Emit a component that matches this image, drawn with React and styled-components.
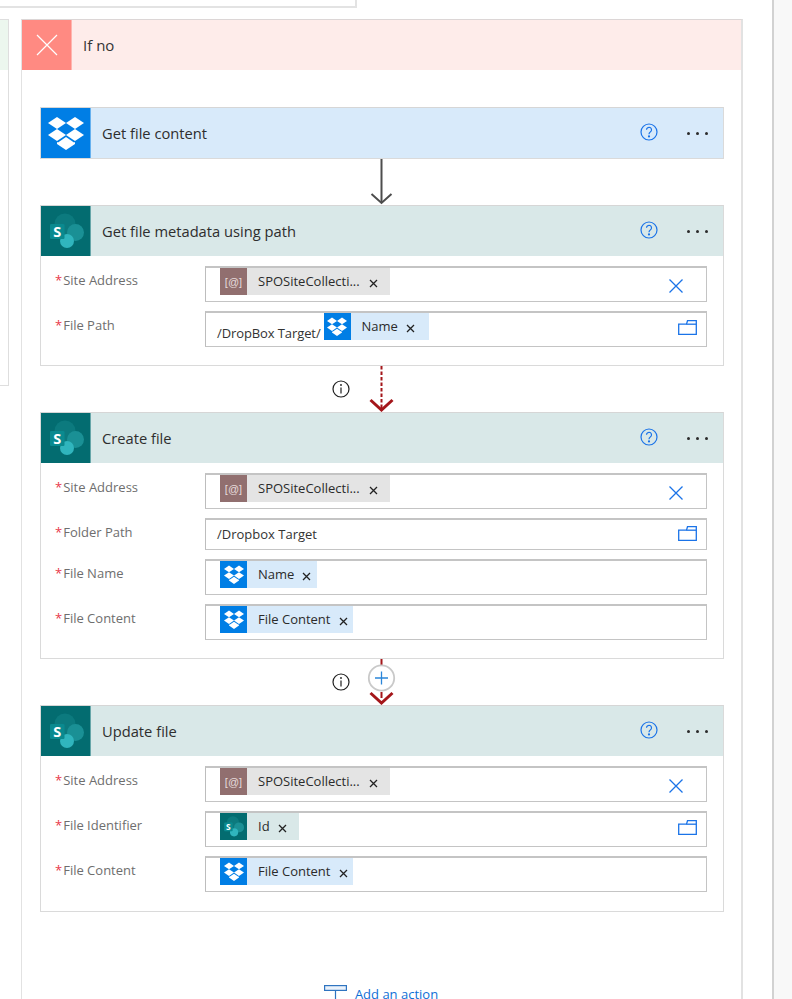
import React from "react";
import styled, { createGlobalStyle } from "styled-components";

const Global = createGlobalStyle`
  html, body { margin: 0; padding: 0; background: #fff; }
  body { font-family: "Open Sans", "Liberation Sans", sans-serif; color: #2b2b2b; }
  * { box-sizing: border-box; }
`;

const Page = styled.div`
  width: 792px; height: 999px; overflow: hidden; display: flex; background: #fff;
`;
const Canvas = styled.main`
  width: 772px; flex: none; height: 999px; overflow: hidden; display: flex; flex-direction: column;
`;
const SidePane = styled.aside`
  flex: 1; background: #f8f8f8; border-left: 2px solid #d2d2d2;
`;
const TopBox = styled.div`
  width: 357px; height: 8px; flex: none; border-right: 2px solid #e3e3e3; border-bottom: 2px solid #e3e3e3;
`;
const Branches = styled.div`
  margin-top: 11px; display: flex; gap: 12px; align-items: flex-start;
`;
const YesBranch = styled.div`
  width: 9px; height: 367px; flex: none; border-top: 1px solid #dedede; border-right: 1px solid #dedede; border-bottom: 1px solid #dedede;
`;
const YesHeader = styled.div`
  height: 50px; background: #ecf7ee;
`;
const NoBranch = styled.section`
  width: 722px; flex: none; height: 990px; border: 1px solid #e2e2e2; border-right-width: 2px; border-top-color: #dcd6d6;
`;
const NoHeader = styled.header`
  height: 50px; background: #feecea; display: flex; align-items: center; gap: 11px;
`;
const NoIcon = styled.div`
  width: 50px; height: 50px; background: #ff8a82; border-right: 1px solid #ffb5af; display: flex; align-items: center; justify-content: center;
`;
const NoTitle = styled.span`
  font-size: 15px; color: #333;
`;
const Flow = styled.div`
  padding: 37px 17px 0 18px; display: flex; flex-direction: column;
`;
const Card = styled.article`
  border: 1px solid #dadada; border-top-color: #d6d6d6; background: #fff;
`;
const CardHeader = styled.div`
  height: 50px; display: flex; align-items: center; background: ${p => (p.$tone === "dropbox" ? "#d8eafa" : "#d9e8e8")};
`;
const CardIcon = styled.div`
  width: 50px; height: 50px; flex: none; display: flex; align-items: center; justify-content: center;
  background: ${p => (p.$tone === "dropbox" ? "#007ee5" : "#036c70")};
  border-right: 1px solid #ffffff66;
`;
const CardTitle = styled.h3`
  margin: 0 0 0 11px; flex: 1; font-size: 14.7px; font-weight: 400; color: #2e2e2e;
`;
const HeaderActions = styled.div`
  display: flex; align-items: center; gap: 29px; padding-right: 15px; margin-top: -2px;
`;
const Dots = styled.div`
  display: flex; gap: 6px; margin-top: 3px;
`;
const Dot = styled.span`
  width: 3px; height: 3px; border-radius: 50%; background: #2b2b2b;
`;
const CardBody = styled.div`
  padding: 10px 16px ${p => p.$bottom}px 14px; display: flex; flex-direction: column; gap: 9px;
`;
const Row = styled.div`
  display: flex; align-items: flex-start;
`;
const Label = styled.label`
  width: 150px; flex: none; padding-top: 4px; font-size: 13px; line-height: 20px; color: #6e6e6e; display: flex; gap: 1px;
`;
const Star = styled.span`
  color: #e8374a;
`;
const Input = styled.div`
  flex: 1; height: ${p => (p.$short ? "32px" : "36px")}; border: 1px solid #c4c4c4; border-top-width: 2px; border-left-color: #bdbdbd;
  display: flex; align-items: ${p => (p.$short ? "center" : "flex-start")}; padding-left: ${p => (p.$plain ? "11px" : "14px")};
  padding-right: 8px; background: #fff;
`;
const PlainText = styled.span`
  font-size: 13px; color: #333; white-space: pre; margin-top: -2px;
`;
const PrefixText = styled(PlainText)`
  align-self: flex-end; padding-bottom: 4px; margin-left: -3px; margin-right: 3px; letter-spacing: -0.1px;
`;
const Token = styled.div`
  height: 27px; display: flex; align-items: center;
  background: ${p => ({ var: "#e4e4e4", dropbox: "#d8eafa", sp: "#d9e8e8" }[p.$tone])};
`;
const TokenIcon = styled.div`
  width: 27px; height: 27px; flex: none; display: flex; align-items: center; justify-content: center;
  background: ${p => ({ var: "#916f6f", dropbox: "#007ee5", sp: "#036c70" }[p.$tone])};
`;
const VarGlyph = styled.span`
  font-family: "Liberation Sans", sans-serif; font-size: 11px; color: #e6dcdc;
`;
const TokenText = styled.span`
  margin-left: 11px; font-size: 13px; color: #2b2b2b; white-space: nowrap; margin-top: -2px;
`;
const TokenClose = styled.span`
  margin: 3px ${p => p.$tail}px 0 ${p => p.$gap}px; display: flex;
`;
const TrailIcon = styled.span`
  margin-left: auto; display: flex; align-self: center; margin-top: ${p => p.$shift}px;
  padding-right: ${p => p.$pad}px;
`;
const Connector = styled.div`
  height: 46px; display: flex; justify-content: center;
`;
const AddAction = styled.div`
  margin-top: 73px; padding-right: 2px; display: flex; justify-content: center; align-items: flex-start; gap: 8px;
`;
const AddText = styled.span`
  font-size: 13px; line-height: 18px; color: #0f6fd6;
`;

const Dropbox = ({ size = 36 }) => (
  <svg width={size} height={size * 34 / 36} viewBox="0 0 36 34" fill="#fff">
    <path d="M9 1 18 7 9 13 0 7Z" />
    <path d="M27 1 36 7 27 13 18 7Z" />
    <path d="M9 13 18 19 9 25 0 19Z" />
    <path d="M27 13 36 19 27 25 18 19Z" />
    <path d="M18 21 26 26.500 27 26 27 28 18 34 9 28 9 26 10 26.500Z" />
  </svg>
);

const SharePoint = ({ size = 36 }) => (
  <svg width={size} height={size} viewBox="0 0 36 36">
    <circle cx="17" cy="11" r="10.500" fill="#0c7a7e" />
    <circle cx="27.500" cy="19.500" r="8.500" fill="#1a9095" />
    <circle cx="19" cy="28" r="7" fill="#30b5bd" />
    <rect x="2" y="11" width="14.500" height="15" rx="1.200" fill="#0a8a8f" />
    <text x="9.200" y="23.500" fontFamily="Open Sans, sans-serif" fontSize="14.500" fontWeight="700" fill="#fff" textAnchor="middle">S</text>
  </svg>
);

const Help = () => (
  <svg width="18" height="18" viewBox="0 0 18 18" fill="none" stroke="#1a73e8" strokeWidth="1.200">
    <circle cx="9" cy="9" r="8" />
    <path d="M6.500 6.800a2.500 2.500 0 1 1 4 2c-.9.7-1.500 1.100-1.500 2.400" />
    <circle cx="9" cy="13.400" r=".5" fill="#1a73e8" />
  </svg>
);

const SmallX = () => (
  <svg width="9" height="9" viewBox="0 0 9 9" stroke="#222" strokeWidth="1.300">
    <path d="M1 1 8 8M8 1 1 8" />
  </svg>
);

const ClearX = () => (
  <svg width="14" height="14" viewBox="0 0 14 14" stroke="#1a73e8" strokeWidth="1.300">
    <path d="M.5 .5 13.500 13.500M13.500 .5 .5 13.500" />
  </svg>
);

const Folder = () => (
  <svg width="19" height="15" viewBox="0 0 19 15" fill="none" stroke="#1a73e8" strokeWidth="1.300">
    <path d="M.7 4.200H8.500L9.500 .7H18.300V14.300H.7Z" />
    <path d="M8.500 4.200H18.300" />
  </svg>
);

const PlainArrow = () => (
  <svg width="120" height="46" viewBox="0 0 120 46" fill="none" stroke="#4d4d4d">
    <path d="M59.500 0V44" strokeWidth="2" />
    <path d="M49.500 35 59.500 44 69.500 35" strokeWidth="2" />
  </svg>
);

const Info = () => (
  <>
    <circle cx="19" cy="23" r="8" fill="none" stroke="#1f1f1f" strokeWidth="1.200" />
    <path d="M19 21.500V27.500" stroke="#1f1f1f" strokeWidth="1.200" />
    <circle cx="19" cy="19" r=".9" fill="#1f1f1f" />
  </>
);

const DashedArrow = () => (
  <svg width="120" height="46" viewBox="0 0 120 46" fill="none">
    <Info />
    <path d="M59.500 0V42" stroke="#a4161a" strokeWidth="2" strokeDasharray="3.500 2" />
    <path d="M48.500 34 59.500 44 70.500 34" stroke="#a4161a" strokeWidth="3" />
  </svg>
);

const PlusArrow = () => (
  <svg width="120" height="46" viewBox="0 0 120 46" fill="none">
    <Info />
    <path d="M59.500 0V6M59.500 33V39" stroke="#a4161a" strokeWidth="2" />
    <circle cx="59.500" cy="19" r="12.700" fill="#fff" stroke="#c9c9c9" strokeWidth="1.800" />
    <path d="M59.500 12.500V25.500M53 19H66" stroke="#2b86d9" strokeWidth="1.300" />
    <path d="M48.500 34 59.500 44 70.500 34" stroke="#a4161a" strokeWidth="3" />
  </svg>
);

const AddIcon = () => (
  <svg width="23" height="14" viewBox="0 0 23 14" fill="none" stroke="#2f74c0" strokeWidth="1.200">
    <rect x=".6" y=".6" width="21.800" height="4.800" fill="#eaf2fb" />
    <path d="M11.500 5.400V14" />
  </svg>
);

const TokenGlyph = ({ tone }) => {
  if (tone === "var") return <VarGlyph>[@]</VarGlyph>;
  if (tone === "dropbox") return <Dropbox size={20} />;
  return <SharePoint size={21} />;
};

const Chip = ({ tone, text, tail = 5, gap = 9 }) => (
  <Token $tone={tone}>
    <TokenIcon $tone={tone}><TokenGlyph tone={tone} /></TokenIcon>
    <TokenText>{text}</TokenText>
    <TokenClose $tail={tail} $gap={gap}><SmallX /></TokenClose>
  </Token>
);

const Field = ({ label, chip, tone, prefix, value, trail, short, tail, gap }) => (
  <Row>
    <Label><Star>*</Star>{label}</Label>
    <Input $short={short} $plain={!!value}>
      {prefix && <PrefixText>{prefix}</PrefixText>}
      {value && <PlainText>{value}</PlainText>}
      {chip && <Chip tone={tone} text={chip} tail={tail} gap={gap} />}
      {trail === "x" && <TrailIcon $pad={15} $shift={3}><ClearX /></TrailIcon>}
      {trail === "folder" && <TrailIcon $pad={1} $shift={short ? -2 : -5}><Folder /></TrailIcon>}
    </Input>
  </Row>
);

const Action = ({ tone, title, bottom = 18, children }) => (
  <Card>
    <CardHeader $tone={tone}>
      <CardIcon $tone={tone}>{tone === "dropbox" ? <Dropbox /> : <SharePoint />}</CardIcon>
      <CardTitle>{title}</CardTitle>
      <HeaderActions>
        <Help />
        <Dots><Dot /><Dot /><Dot /></Dots>
      </HeaderActions>
    </CardHeader>
    {children && <CardBody $bottom={bottom}>{children}</CardBody>}
  </Card>
);

const SITE = "SPOSiteCollecti...";

export default function App() {
  return (
    <Page>
      <Global />
      <Canvas>
        <TopBox />
        <Branches>
          <YesBranch><YesHeader /></YesBranch>
          <NoBranch>
            <NoHeader>
              <NoIcon>
                <svg width="22" height="22" viewBox="0 0 22 22" stroke="#fff" strokeWidth="1.200">
                  <path d="M1 1 21 21M21 1 1 21" />
                </svg>
              </NoIcon>
              <NoTitle>If no</NoTitle>
            </NoHeader>
            <Flow>
              <Action tone="dropbox" title="Get file content" />
              <Connector><PlainArrow /></Connector>
              <Action tone="sp" title="Get file metadata using path">
                <Field label="Site Address" chip={SITE} tone="var" trail="x" tail={12} />
                <Field label="File Path" prefix="/DropBox Target/" chip="Name" tone="dropbox" trail="folder" tail={14} gap={8} />
              </Action>
              <Connector><DashedArrow /></Connector>
              <Action tone="sp" title="Create file">
                <Field label="Site Address" chip={SITE} tone="var" trail="x" tail={12} />
                <Field label="Folder Path" value="/Dropbox Target" trail="folder" short />
                <Field label="File Name" chip="Name" tone="dropbox" gap={8} tail={6} />
                <Field label="File Content" chip="File Content" tone="dropbox" />
              </Action>
              <Connector><PlusArrow /></Connector>
              <Action tone="sp" title="Update file" bottom={19}>
                <Field label="Site Address" chip={SITE} tone="var" trail="x" tail={12} />
                <Field label="File Identifier" chip="Id" tone="sp" trail="folder" tail={12} gap={8} />
                <Field label="File Content" chip="File Content" tone="dropbox" />
              </Action>
              <AddAction>
                <AddIcon />
                <AddText>Add an action</AddText>
              </AddAction>
            </Flow>
          </NoBranch>
        </Branches>
      </Canvas>
      <SidePane />
    </Page>
  );
}
